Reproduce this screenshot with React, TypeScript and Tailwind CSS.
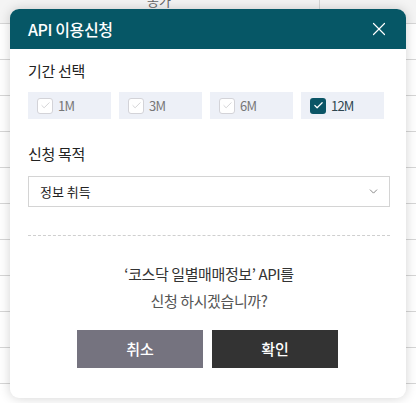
import { X, ChevronDown, Check } from "lucide-react";

const periods = [
  { label: "1M", checked: false },
  { label: "3M", checked: false },
  { label: "6M", checked: false },
  { label: "12M", checked: true },
];

function Background() {
  return (
    <div className="absolute inset-0 bg-white">
      <div className="h-[24px] bg-[#f4f4f4] border-b border-[#d6d6d6] flex">
        <div className="w-[320px] border-r border-[#d6d6d6] relative">
          <span className="absolute left-[147px] top-[-9px] text-[13px] text-[#666]">종가</span>
        </div>
      </div>
      {Array.from({ length: 11 }).map((_, i) => (
        <div key={i} className="h-[36px] border-b border-[#d6d6d6]" />
      ))}
    </div>
  );
}

export default function App() {
  return (
    <div
      className="relative w-[416px] h-[403px] overflow-hidden"
      style={{ fontFamily: '"Noto Sans CJK KR", "Noto Sans", sans-serif' }}
    >
      <Background />
      <div className="absolute left-[10px] top-[9px] w-[396px] h-[389px] bg-white rounded-[9px] overflow-hidden shadow-[0_0_12px_rgba(0,0,0,0.18)] flex flex-col">
        <div className="h-[40px] bg-[#065766] flex items-center justify-between pl-[18px] pr-[16px]">
          <span className="text-white text-[16px] font-medium tracking-[-0.4px]">API 이용신청</span>
          <X size={22} strokeWidth={1.3} className="text-white" />
        </div>

        <div className="pt-[11px] pl-[18px] pr-[16px] flex flex-col">
          <h3 className="text-[15px] leading-[22px] text-[#222] tracking-[-0.3px]">기간 선택</h3>
          <div className="mt-[10px] flex gap-[8px]">
            {periods.map((p) => (
              <label
                key={p.label}
                className="w-[83px] h-[27px] bg-[#edf0f7] flex items-center pl-[9px] gap-[5px]"
              >
                {p.checked ? (
                  <span className="w-[16px] h-[16px] rounded-[3px] bg-[#0b5566] flex items-center justify-center">
                    <Check size={11} strokeWidth={2.6} className="text-white" />
                  </span>
                ) : (
                  <span className="w-[16px] h-[16px] rounded-[3px] bg-white border border-[#d3d3d8] flex items-center justify-center">
                    <Check size={11} strokeWidth={1.6} className="text-[#c4c4c8]" />
                  </span>
                )}
                <span
                  className={
                    p.checked
                      ? "text-[13px] text-[#2f4650] tracking-[-0.8px]"
                      : "text-[13px] text-[#777] tracking-[-0.8px]"
                  }
                >
                  {p.label}
                </span>
              </label>
            ))}
          </div>

          <h3 className="mt-[24px] text-[15px] leading-[22px] text-[#222] tracking-[-0.3px]">신청 목적</h3>
          <div className="mt-[11px] h-[31px] border border-[#d4d4d4] flex items-center justify-between pl-[11px] pr-[9px]">
            <span className="text-[13px] text-[#222]">정보 취득</span>
            <ChevronDown size={13} strokeWidth={1.6} className="text-[#777]" />
          </div>

          <div className="mt-[28px] border-t border-dashed border-[#cfcfcf]" />

          <div className="mt-[24px] text-center text-[15px] leading-[27px] text-[#333] tracking-[-0.4px]">
            <p>‘코스닥 일별매매정보’ API를</p>
            <p className="text-[#555]">신청 하시겠습니까?</p>
          </div>

          <div className="mt-[16px] flex pl-[49px] gap-[9px]">
            <button className="w-[126px] h-[38px] bg-[#75737f] text-white text-[15px] font-medium">취소</button>
            <button className="w-[126px] h-[38px] bg-[#333333] text-white text-[15px] font-medium">확인</button>
          </div>
        </div>
      </div>
    </div>
  );
}
